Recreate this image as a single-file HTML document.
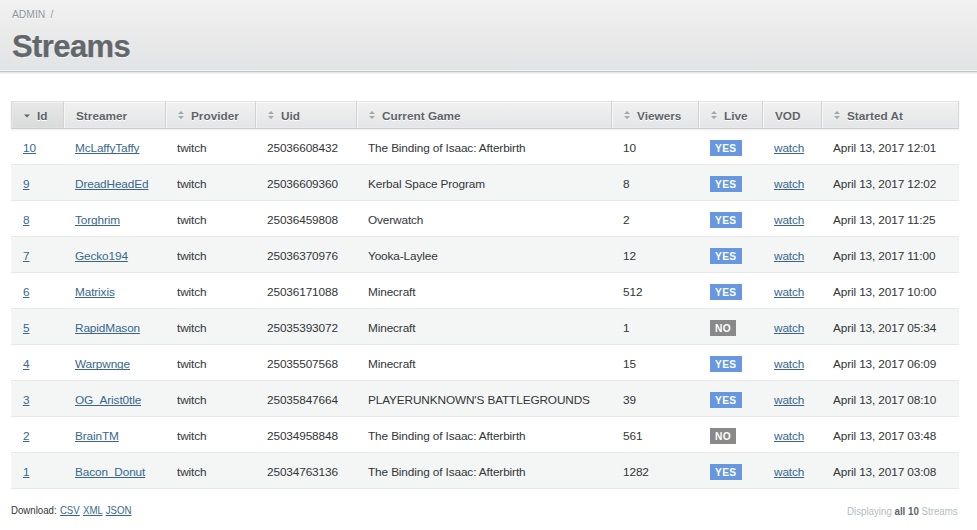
<!DOCTYPE html>
<html><head><meta charset="utf-8">
<style>
*{box-sizing:border-box}
html,body{margin:0;padding:0;background:#fff;width:977px;height:530px;overflow:hidden}
body{font-family:"Liberation Sans",sans-serif;color:#323537;position:relative}
#tb{position:absolute;left:-20px;top:0;width:1017px;height:72px;background:linear-gradient(#f1f1f1,#e2e3e4);border-bottom:1px solid #c4c4c4;box-shadow:0 1px 2px rgba(0,0,0,.14), inset 0 -1px 0 #f3f4f4}
#bc{position:absolute;left:12px;top:8px;font-size:10.3px;color:#8a949e;line-height:13px;text-shadow:0 1px 0 #fff;white-space:nowrap}
#h2{position:absolute;left:12px;top:29px;font-size:31px;letter-spacing:-0.6px;-webkit-text-stroke:0.25px #62676c;font-weight:bold;color:#62676c;line-height:36px;text-shadow:0 1px 0 #fff;white-space:nowrap}
table{position:absolute;left:11px;top:101px;width:948px;border-collapse:separate;border-spacing:0;table-layout:fixed;font-size:11.5px}
th{height:28px;padding:1px 0 0 12px;text-align:left;font-weight:bold;font-size:11.8px;color:#5e6469;background:linear-gradient(#f1f1f1,#e4e5e6);border-top:1px solid #e2e2e2;border-bottom:1px solid #cdcdcd;border-right:1px solid #d9d9d9;text-shadow:0 1px 0 #fff;white-space:nowrap;box-shadow:inset 1px 0 0 #f6f6f6,inset 0 1px 0 #f8f8f8,inset 0 -1px 0 #e9eaea,0 1px 2px rgba(0,0,0,.08)}
th:first-child{border-left:1px solid #d9d9d9;padding-left:12px;box-shadow:inset 1px 0 0 #e6e6e6,inset 0 1px 0 #f0f0f0,inset 0 -1px 0 #e0e0e0,0 1px 2px rgba(0,0,0,.08)}
th.sorted{background:linear-gradient(#e8e8e8,#d9dadb)}
td{height:36px;padding:2px 0 0 11px;font-size:11.8px;letter-spacing:-0.12px;border-bottom:1px solid #e8e8e8;white-space:nowrap}
td:first-child{padding-left:12px}
tr.even td{background:#f4f5f5}
a{color:#38678b;text-decoration:underline;text-decoration-skip-ink:none}
.si{display:inline-block;width:6px;height:9px;vertical-align:middle;margin-right:7px;position:relative;top:-1px}
.tag{display:inline-block;margin-left:0;font-size:10.2px;font-weight:bold;color:#fff;letter-spacing:.35px;padding:0 0 0 5px;height:16px;line-height:18px;vertical-align:middle;overflow:hidden}
.yes{background:#6797df;width:32px}.no{background:#898989;width:26px}
#dl{position:absolute;left:11px;top:504px;font-size:10.5px;transform:scaleX(0.92);transform-origin:0 0;line-height:13px;white-space:nowrap}
#dl a{margin-left:0.6px}
#pi{position:absolute;right:19px;top:505px;font-size:10.5px;transform:scaleX(0.925);transform-origin:100% 0;line-height:13px;color:#b3bcc1;white-space:nowrap}
#pi b{color:#5e6469}
</style></head><body>
<div id="tb"></div>
<div id="bc">ADMIN<span style="position:absolute;left:38.5px;top:0">/</span></div>
<div id="h2">Streams</div>
<table>
<colgroup><col style="width:53px"><col style="width:102px"><col style="width:90px"><col style="width:101px"><col style="width:255px"><col style="width:87px"><col style="width:64px"><col style="width:59px"><col style="width:137px"></colgroup>
<thead><tr>
<th class="sorted"><svg class="si" viewBox="0 0 6 9"><path d="M0 3.5H6L3 6.5Z" fill="#5e6469"/></svg>Id</th>
<th>Streamer</th>
<th><svg class="si" viewBox="0 0 6 9"><path d="M0 3H6L3 0Z M0 5H6L3 8Z" fill="#a3a7ab"/></svg>Provider</th>
<th><svg class="si" viewBox="0 0 6 9"><path d="M0 3H6L3 0Z M0 5H6L3 8Z" fill="#a3a7ab"/></svg>Uid</th>
<th><svg class="si" viewBox="0 0 6 9"><path d="M0 3H6L3 0Z M0 5H6L3 8Z" fill="#a3a7ab"/></svg>Current Game</th>
<th><svg class="si" viewBox="0 0 6 9"><path d="M0 3H6L3 0Z M0 5H6L3 8Z" fill="#a3a7ab"/></svg>Viewers</th>
<th><svg class="si" viewBox="0 0 6 9"><path d="M0 3H6L3 0Z M0 5H6L3 8Z" fill="#a3a7ab"/></svg>Live</th>
<th>VOD</th>
<th><svg class="si" viewBox="0 0 6 9"><path d="M0 3H6L3 0Z M0 5H6L3 8Z" fill="#a3a7ab"/></svg>Started At</th>
</tr></thead>
<tbody>
<tr class="odd"><td><a>10</a></td><td><a>McLaffyTaffy</a></td><td>twitch</td><td>25036608432</td><td>The Binding of Isaac: Afterbirth</td><td>10</td><td><span class="tag yes">YES</span></td><td><a>watch</a></td><td>April 13, 2017 12:01</td></tr>
<tr class="even"><td><a>9</a></td><td><a>DreadHeadEd</a></td><td>twitch</td><td>25036609360</td><td>Kerbal Space Program</td><td>8</td><td><span class="tag yes">YES</span></td><td><a>watch</a></td><td>April 13, 2017 12:02</td></tr>
<tr class="odd"><td><a>8</a></td><td><a>Torghrim</a></td><td>twitch</td><td>25036459808</td><td>Overwatch</td><td>2</td><td><span class="tag yes">YES</span></td><td><a>watch</a></td><td>April 13, 2017 11:25</td></tr>
<tr class="even"><td><a>7</a></td><td><a>Gecko194</a></td><td>twitch</td><td>25036370976</td><td>Yooka-Laylee</td><td>12</td><td><span class="tag yes">YES</span></td><td><a>watch</a></td><td>April 13, 2017 11:00</td></tr>
<tr class="odd"><td><a>6</a></td><td><a>Matrixis</a></td><td>twitch</td><td>25036171088</td><td>Minecraft</td><td>512</td><td><span class="tag yes">YES</span></td><td><a>watch</a></td><td>April 13, 2017 10:00</td></tr>
<tr class="even"><td><a>5</a></td><td><a>RapidMason</a></td><td>twitch</td><td>25035393072</td><td>Minecraft</td><td>1</td><td><span class="tag no">NO</span></td><td><a>watch</a></td><td>April 13, 2017 05:34</td></tr>
<tr class="odd"><td><a>4</a></td><td><a>Warpwnge</a></td><td>twitch</td><td>25035507568</td><td>Minecraft</td><td>15</td><td><span class="tag yes">YES</span></td><td><a>watch</a></td><td>April 13, 2017 06:09</td></tr>
<tr class="even"><td><a>3</a></td><td><a>OG_Arist0tle</a></td><td>twitch</td><td>25035847664</td><td>PLAYERUNKNOWN'S BATTLEGROUNDS</td><td>39</td><td><span class="tag yes">YES</span></td><td><a>watch</a></td><td>April 13, 2017 08:10</td></tr>
<tr class="odd"><td><a>2</a></td><td><a>BrainTM</a></td><td>twitch</td><td>25034958848</td><td>The Binding of Isaac: Afterbirth</td><td>561</td><td><span class="tag no">NO</span></td><td><a>watch</a></td><td>April 13, 2017 03:48</td></tr>
<tr class="even"><td><a>1</a></td><td><a>Bacon_Donut</a></td><td>twitch</td><td>25034763136</td><td>The Binding of Isaac: Afterbirth</td><td>1282</td><td><span class="tag yes">YES</span></td><td><a>watch</a></td><td>April 13, 2017 03:08</td></tr>
</tbody>
</table>
<div id="dl">Download: <a>CSV</a> <a>XML</a> <a>JSON</a></div>
<div id="pi">Displaying <b>all 10</b> Streams</div>
</body></html>
